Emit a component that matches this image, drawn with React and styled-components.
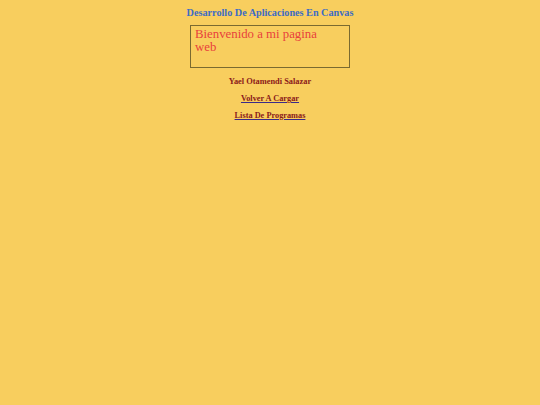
import React from "react";
import styled, { createGlobalStyle } from "styled-components";

const GlobalStyle = createGlobalStyle`
  html, body {
    margin: 0;
    padding: 0;
    background: #f8ce5e;
    font-family: "Liberation Serif", "Times New Roman", serif;
  }
`;

const Page = styled.div`
  display: flex;
  flex-direction: column;
  align-items: center;
  padding-top: 6px;
  min-height: 405px;
  box-sizing: border-box;
`;

const Title = styled.h1`
  margin: 0;
  font-size: 10.2px;
  font-weight: bold;
  color: #3d6cc4;
  line-height: 13px;
`;

const Canvas = styled.div`
  margin-top: 6px;
  width: 160px;
  height: 43px;
  border: 1px solid #7a6a30;
  padding: 2px 4px;
  box-sizing: border-box;
  color: #e8413c;
  font-size: 12.8px;
  line-height: 12.5px;
`;

const Author = styled.p`
  margin: 8px 0 0;
  font-size: 8.4px;
  font-weight: bold;
  color: #8b1a1a;
  line-height: 11px;
`;

const Link = styled.a`
  margin-top: 6px;
  font-size: 8.3px;
  font-weight: bold;
  line-height: 11px;
  color: #3a2a8a;
  text-decoration: underline;
  cursor: pointer;

  span {
    color: #8b1a1a;
  }
`;

const App = () => {
  return (
    <Page>
      <GlobalStyle />
      <Title>Desarrollo De Aplicaciones En Canvas</Title>
      <Canvas>
        Bienvenido a mi pagina
        <br />
        web
      </Canvas>
      <Author>Yael Otamendi Salazar</Author>
      <Link href="#">
        <span>Volver A Cargar</span>
      </Link>
      <Link href="#">
        <span>Lista De Programas</span>
      </Link>
    </Page>
  );
};

export default App;
